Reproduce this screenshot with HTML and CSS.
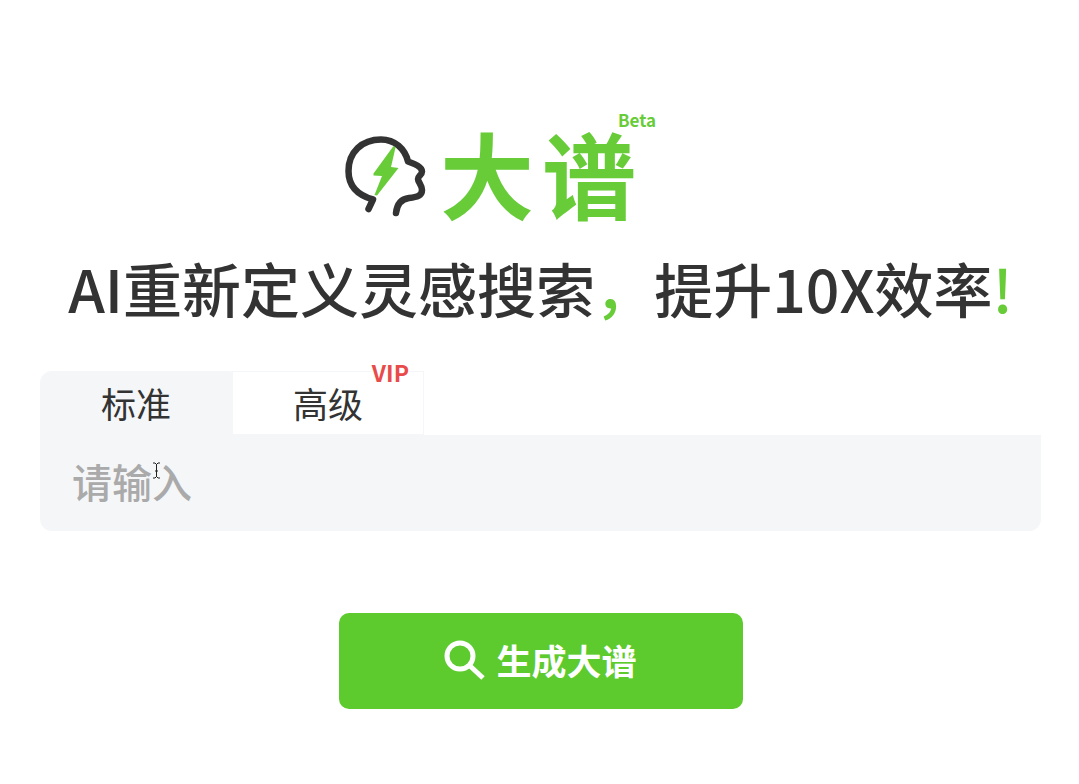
FILE: index.html
```html
<!DOCTYPE html>
<html lang="zh-CN">
<head>
<meta charset="utf-8">
<meta name="viewport" content="width=device-width, initial-scale=1">
<title>大谱</title>
<link rel="stylesheet" href="styles.css">
</head>
<body>
<main class="page">
  <div class="brand">
    <svg class="brand-icon" viewBox="0 0 95 95" aria-hidden="true">
      <path class="head" d="M27.500 84L32 74.500C16 70 7.500 61 7.500 46C7.500 27 21 14.500 40 14.500C54 14.500 64 24 67 36.500C74 39 81 42 81 46.500C81 50 77 51 77 54C77 57 81 60 81 65C81 71 76 72 68 73C60 74 56 79 55 88"/>
      <path class="bolt" d="M52.500 21L54.500 22.500L50 42L57.500 43L36 70.500L33.500 70L41 51L32.500 50.500V48.500Z"/>
    </svg>
    <div class="brand-name"><span>大</span><span>谱</span></div>
    <span class="beta">Beta</span>
  </div>
  <h1 class="slogan">AI重新定义灵感搜索<span class="accent">，</span>提升10X效率<span class="accent">!</span></h1>
  <form class="search">
    <div class="tabs" role="tablist">
      <button class="tab active" type="button" role="tab" aria-selected="true">标准</button>
      <button class="tab" type="button" role="tab" aria-selected="false">高级<span class="vip">VIP</span></button>
    </div>
    <div class="field">
      <input class="query" type="text" placeholder="请输入" aria-label="请输入">
      <svg class="cursor" viewBox="0 0 9 17" aria-hidden="true"><path d="M1 1H3L4.500 2.500L6 1H8M4.500 2V15M1 16H3L4.500 14.500L6 16H8M3 9H6"/></svg>
    </div>
    <button class="submit" type="button">
      <svg class="lens" viewBox="0 0 42 42" aria-hidden="true"><circle cx="16" cy="18" r="13"/><path d="M25 27L39 40"/></svg>
      <span>生成大谱</span>
    </button>
  </form>
</main>
</body>
</html>
```
FILE: styles.css
```css
* { box-sizing: border-box; }

body {
  margin: 0;
  background: #fff;
  color: #333;
  font-family: "Noto Sans CJK SC", sans-serif;
}

button, input { font: inherit; color: inherit; border: 0; }

.page { padding: 108px 38px 72px 40px; }

.brand {
  position: relative;
  display: flex;
  justify-content: center;
  align-items: center;
  width: max-content;
  margin: 0 auto;
  padding-right: 104px;
  gap: 4px;
}

.brand-icon { width: 95px; height: 95px; }
.head { fill: none; stroke: #333; stroke-width: 6.5; stroke-linecap: round; stroke-linejoin: round; }
.bolt { fill: #67cc38; }

.brand-name {
  display: flex;
  gap: 8px;
  color: #67cc38;
  font-size: 94px;
  font-weight: 700;
  line-height: 128px;
}

.beta {
  position: absolute;
  top: 2px;
  right: 84px;
  color: #67cc38;
  font-size: 17px;
  font-weight: 700;
  line-height: 20px;
}

.slogan {
  margin: 8px 0 0;
  font-size: 59px;
  font-weight: 500;
  line-height: 88px;
  text-align: center;
  white-space: nowrap;
}

.accent { color: #67cc38; }

.search { margin-top: 39px; }

.tabs { display: flex; }

.tab {
  position: relative;
  width: 192px;
  height: 64px;
  padding: 0;
  background: #fff;
  border: 1px solid #f5f6f8;
  font-size: 35px;
  line-height: 58px;
}

.tab.active { background: #f5f6f8; border-radius: 12px 0 0 0; }

.vip {
  position: absolute;
  top: -15px;
  right: 14px;
  background: #fff;
  color: #e94b4b;
  font-size: 23px;
  font-weight: 700;
  line-height: 30px;
}

.field { position: relative; }

.query {
  display: block;
  width: 100%;
  height: 96px;
  padding: 0 32px 4px;
  border-radius: 0 0 12px 12px;
  background: #f5f6f8;
  font-size: 40px;
  font-weight: 500;
  outline: 0;
}

.query::placeholder { color: #aaa; opacity: 1; }

.cursor {
  position: absolute;
  top: 27px;
  left: 112px;
  width: 9px;
  height: 17px;
  fill: none;
  stroke: #222;
}

.submit {
  display: flex;
  justify-content: center;
  align-items: center;
  gap: 10px;
  width: 404px;
  height: 96px;
  margin: 82px auto 0;
  padding: 0 6px 4px;
  border-radius: 10px;
  background: #5dca2d;
  color: #fff;
  font-size: 35px;
  font-weight: 700;
}

.lens { width: 42px; height: 42px; fill: none; stroke: #fff; stroke-width: 5; }
```
